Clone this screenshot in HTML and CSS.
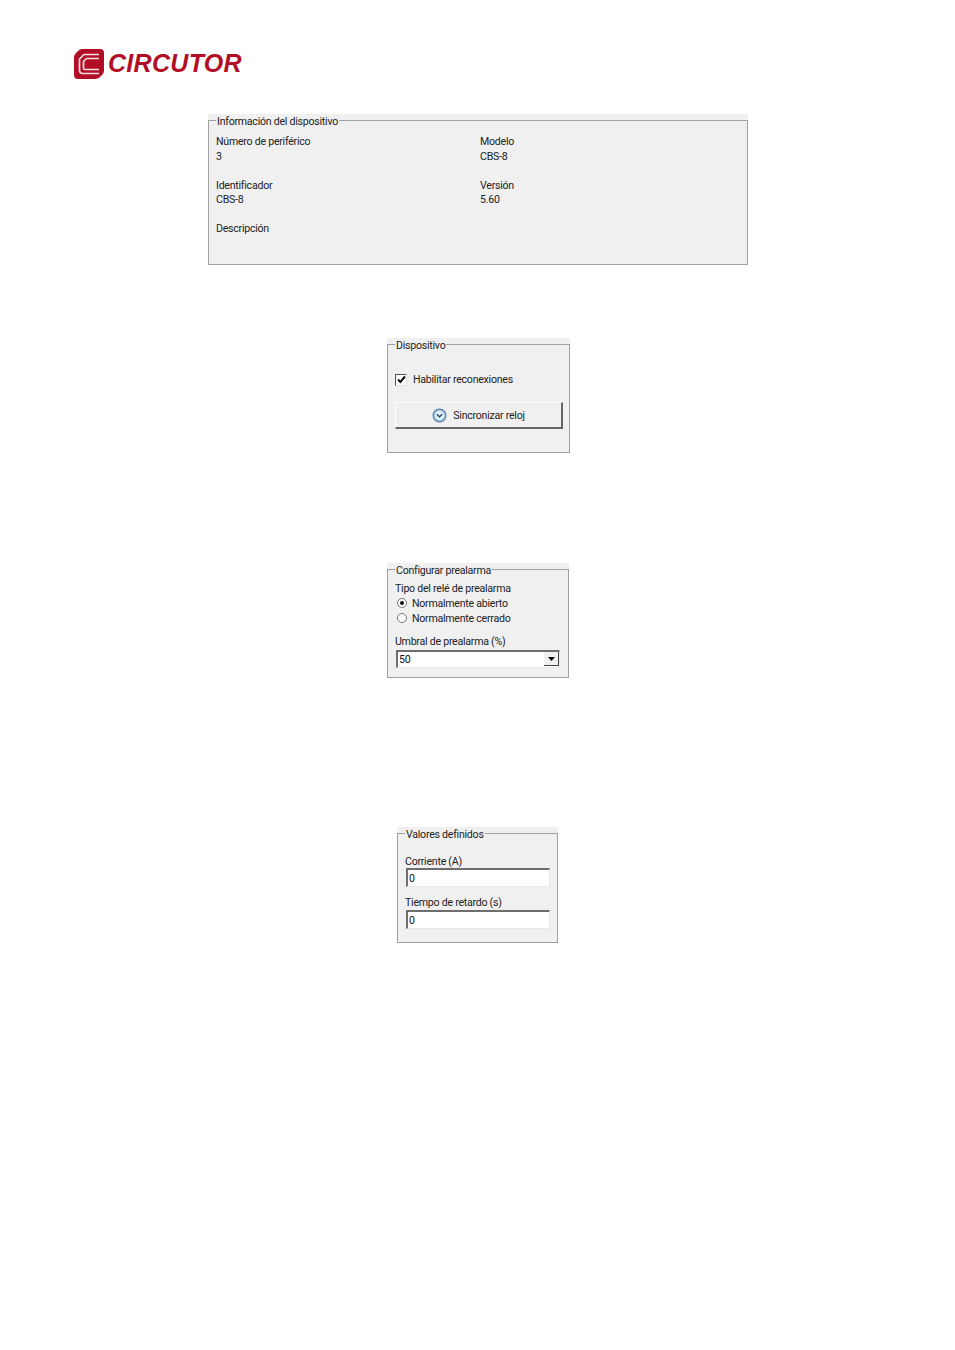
FILE: index.html
```html
<!DOCTYPE html>
<html lang="es">
<head>
<meta charset="utf-8">
<title>Circutor</title>
<link rel="stylesheet" href="styles.css">
</head>
<body>
<div class="page">
  <header class="logo">
    <svg class="logo-mark" width="32" height="32" viewBox="0 0 32 32" aria-hidden="true">
      <path d="M9 1H27Q31 1 31 5V23Q31 25 29 27L27 29Q25 31 22 31H5Q1 31 1 27V9Q1 7 3 5L5 3Q7 1 9 1Z" fill="#b20f26"/>
      <path d="M26 6.5H11L6.5 11V22Q6.5 25.5 10 25.5H26" fill="none" stroke="#f6dfe2" stroke-width="1.7"/>
      <path d="M26 10.5H13.5L10.5 13.5V20Q10.5 21.5 12 21.5H26" fill="none" stroke="#f6dfe2" stroke-width="1.7"/>
    </svg>
    <span class="logo-text">CIRCUTOR</span>
  </header>

  <section class="panel panel-info">
    <fieldset class="group group-info">
      <legend>Información del dispositivo</legend>
      <div class="info-grid">
        <div class="field"><span>Número de periférico</span><span>3</span></div>
        <div class="field"><span>Modelo</span><span>CBS-8</span></div>
        <div class="field"><span>Identificador</span><span>CBS-8</span></div>
        <div class="field"><span>Versión</span><span>5.60</span></div>
        <div class="field"><span>Descripción</span></div>
      </div>
    </fieldset>
  </section>

  <section class="panel panel-device">
    <fieldset class="group group-device">
      <legend>Dispositivo</legend>
      <label class="check-row">
        <span class="checkbox">
          <svg width="9" height="9" viewBox="0 0 9 9" aria-hidden="true"><path d="M1 4.5L3.4 7L8 1.5" fill="none" stroke="#111" stroke-width="2"/></svg>
        </span>
        Habilitar reconexiones
      </label>
      <div class="button">
        <svg width="15" height="15" viewBox="0 0 15 15" aria-hidden="true">
          <circle cx="7.5" cy="7.5" r="6.4" fill="#a9d0ec" stroke="#5d7f9e" stroke-width="1.2"/>
          <circle cx="7.5" cy="7.5" r="4.2" fill="#e6f2fb"/>
          <path d="M4.8 6.2L7.5 8.8L10.2 6.2" fill="none" stroke="#25405c" stroke-width="1.2"/>
        </svg>
        Sincronizar reloj
      </div>
    </fieldset>
  </section>

  <section class="panel panel-alarm">
    <fieldset class="group group-alarm">
      <legend>Configurar prealarma</legend>
      <div class="line">Tipo del relé de prealarma</div>
      <div class="radio-row"><span class="radio radio-on"></span>Normalmente abierto</div>
      <div class="radio-row"><span class="radio"></span>Normalmente cerrado</div>
      <div class="line line-threshold">Umbral de prealarma (%)</div>
      <div class="input combo">
        <span>50</span>
        <span class="combo-btn"><svg width="7" height="4" viewBox="0 0 7 4" aria-hidden="true"><path d="M0 0H7L3.5 4Z" fill="#000"/></svg></span>
      </div>
    </fieldset>
  </section>

  <section class="panel panel-values">
    <fieldset class="group group-values">
      <legend>Valores definidos</legend>
      <div class="line line-current">Corriente (A)</div>
      <div class="input">0</div>
      <div class="line line-delay">Tiempo de retardo (s)</div>
      <div class="input">0</div>
    </fieldset>
  </section>
</div>
</body>
</html>
```
FILE: styles.css
```css
* { box-sizing: border-box; }
html, body { margin: 0; padding: 0; background: #fff; }
body { font-family: Roboto, "Liberation Sans", Arial, sans-serif; font-size: 10.6px; letter-spacing: -0.25px; color: #222; }
.page { width: 955px; height: 1350px; display: flex; flex-direction: column; overflow: hidden; }

.logo { display: flex; align-items: center; gap: 3px; margin: 47px 0 0 73px; height: 33px; }
.logo-mark { flex: none; }
.logo-text { font-family: "Liberation Sans", Arial, sans-serif; font-weight: bold; font-style: italic; font-size: 25px; line-height: 33px; color: #b20f26; letter-spacing: 0.3px; }

.panel { background: #f0f0f0; flex: none; padding-top: 6px; }
.panel-info { width: 540px; height: 151px; margin: 34px 0 0 208px; }
.panel-device { width: 183px; height: 115px; margin: 73px 0 0 387px; }
.panel-alarm { width: 182px; height: 115px; margin: 110px 0 0 387px; }
.panel-values { width: 161px; height: 116px; margin: 149px 0 0 397px; }

.group { position: relative; margin: 0; padding: 0; height: 100%; border: 1px solid #a0a0a0; min-width: 0; }
.group legend { position: absolute; top: -6px; left: 7px; padding: 0 1px; background: #f0f0f0; font-size: 10.6px; line-height: 13px; }

.group-info { padding: 14px 7px 0; }
.info-grid { display: grid; grid-template-columns: 264px 1fr; row-gap: 14.5px; }
.field { display: flex; flex-direction: column; line-height: 14.5px; }

.group-device { padding: 0 6px 0 7px; }
.check-row { display: flex; align-items: center; gap: 6px; margin-top: 28px; height: 13px; line-height: 13px; }
.checkbox { width: 12px; height: 12px; display: flex; align-items: center; justify-content: center; background: #fff; border: 1px solid #555; border-right-color: #ddd; border-bottom-color: #ddd; }
.button { display: flex; align-items: center; justify-content: center; gap: 6px; height: 27px; margin-top: 16px; background: #f0f0f0; border: 1px solid #fff; border-right: 2px solid #666; border-bottom: 2px solid #666; }

.group-alarm { padding: 12px 8px 0 7px; }
.line { line-height: 14px; }
.radio-row { display: flex; align-items: center; gap: 5px; line-height: 15px; height: 15px; margin-left: 2px; }
.radio { flex: none; width: 10px; height: 10px; margin-top: -2px; border-radius: 50%; background: #fff; border: 1px solid #777; display: flex; align-items: center; justify-content: center; }
.radio-on::after { content: ""; width: 4px; height: 4px; border-radius: 50%; background: #111; }
.line-threshold { margin-top: 9px; }
.input { height: 19px; margin-left: 1px; padding-left: 1px; line-height: 17px; background: #fff; color: #111; border: 1px solid #e8e8e8; border-top: 2px solid #6e6e6e; border-left: 2px solid #6e6e6e; }
.combo { display: flex; justify-content: space-between; height: 18px; margin: 1px 0 0 1px; padding-left: 1px; line-height: 16px; }
.combo-btn { width: 15px; height: 14px; margin: 0 0 0 auto; display: flex; align-items: center; justify-content: center; background: #f0f0f0; border-right: 1px solid #444; border-bottom: 1px solid #444; }

.group-values { padding: 0 7px 0 7px; }
.line-current { margin-top: 21px; line-height: 13px; }
.line-delay { margin-top: 9px; }
```
